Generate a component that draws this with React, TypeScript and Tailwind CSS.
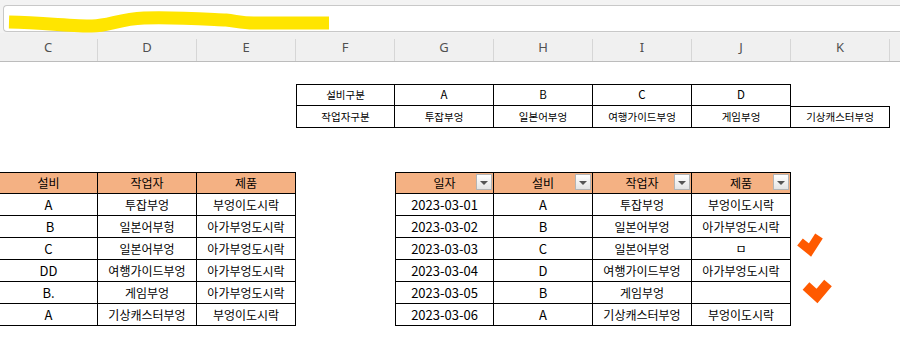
type Cell = {
  t?: string;
  b?: boolean;
  top?: boolean;
  left?: boolean;
  h?: boolean;
  f?: boolean;
  s?: boolean;
};

const E: Cell = {};
const COLS = ["C", "D", "E", "F", "G", "H", "I", "J", "K", ""];

const sm = (t: string, extra: Partial<Cell> = {}): Cell => ({ t, b: true, s: true, ...extra });
const d = (t: string, extra: Partial<Cell> = {}): Cell => ({ t, b: true, ...extra });
const hd = (t: string, extra: Partial<Cell> = {}): Cell => ({ t, b: true, h: true, top: true, ...extra });

const left = [
  ["A", "투잡부엉", "부엉이도시락"],
  [" B", "일본어부헝", "아가부엉도시락"],
  ["C", "일본어부엉", "아가부엉도시락"],
  ["DD", "여행가이드부엉", "아가부엉도시락"],
  ["B.", "게임부엉", "아가부엉도시락"],
  ["A", "기상캐스터부엉", "부엉이도시락"],
];

const right = [
  ["2023-03-01", "A", "투잡부엉", "부엉이도시락"],
  ["2023-03-02", "B", "일본어부엉", "아가부엉도시락"],
  ["2023-03-03", "C", "일본어부엉", "ㅁ"],
  ["2023-03-04", "D", "여행가이드부엉", "아가부엉도시락"],
  ["2023-03-05", "B", "게임부엉", ""],
  ["2023-03-06", "A", "기상캐스터부엉", "부엉이도시락"],
];

const rows: Cell[][] = [
  [E, E, E, E, E, E, E, E, E, E],
  [E, E, E, sm("설비구분", { top: true, left: true }), sm("A", { top: true }), sm("B", { top: true }), sm("C", { top: true }), sm("D", { top: true }), E, E],
  [E, E, E, sm("작업자구분", { left: true }), sm("투잡부엉"), sm("일본어부엉"), sm("여행가이드부엉"), sm("게임부엉"), sm("기상캐스터부엉", { top: true }), E],
  [E, E, E, E, E, E, E, E, E, E],
  [E, E, E, E, E, E, E, E, E, E],
  [hd("설비", { left: true }), hd("작업자"), hd("제품"), E, hd("일자", { left: true, f: true }), hd("설비", { f: true }), hd("작업자", { f: true }), hd("제품", { f: true }), E, E],
  ...left.map((r, i) => [
    d(r[0], { left: true }),
    d(r[1]),
    d(r[2]),
    E,
    d(right[i][0], { left: true }),
    d(right[i][1]),
    d(right[i][2]),
    d(right[i][3]),
    E,
    E,
  ]),
  [E, E, E, E, E, E, E, E, E, E],
];

// latin-only cells read a bit larger than the hangul ones in the sheet
const latin = (t?: string) => !!t && !/[\u3131-\uD7A3]/.test(t);

function FilterButton() {
  return (
    <div className="absolute right-[1px] top-[1px] w-4 h-4 border border-[#b4b4b4] bg-gradient-to-b from-white to-[#e4e4e4] flex items-center justify-center">
      <div className="w-0 h-0 mt-[2px] border-l-[4px] border-r-[4px] border-t-[4px] border-l-transparent border-r-transparent border-t-[#555]" />
    </div>
  );
}

function SheetCell({ c }: { c: Cell }) {
  const size = c.s
    ? latin(c.t) ? "text-[11.5px]" : "text-[10.5px]"
    : latin(c.t) ? "text-[13px]" : "text-[12px]";
  return (
    <div
      className={[
        "w-[99px] h-[22px] shrink-0 relative flex items-center justify-center whitespace-pre text-black",
        c.b ? "border-r border-b border-black" : "",
        c.top ? "border-t" : "",
        c.left ? "border-l" : "",
        c.h ? "bg-[#f4b183]" : "",
        size,
      ].join(" ")}
    >
      {c.t}
      {c.f && <FilterButton />}
    </div>
  );
}

export default function App() {
  return (
    <div className="relative w-[900px] h-[345px] overflow-hidden bg-white font-['Noto_Sans_CJK_KR',sans-serif]">
      {/* formula bar */}
      <div className="h-[33px] bg-[#f3f3f3] pt-[5px] pl-[3px]">
        <div className="h-[27px] w-[920px] bg-white border border-r-0 border-[#c8c8c8] rounded-[4px]">
          <svg width="340" height="27" viewBox="0 0 340 27" className="block">
            <path
              d="M5 16 C40 17 70 20 88 20 C105 20 115 13 140 12 C170 11 200 13 222 14 C232 15 238 17 250 17 L325 17"
              fill="none"
              stroke="#ffe500"
              strokeWidth="13"
            />
          </svg>
        </div>
      </div>

      {/* column headers */}
      <div className="flex h-[29px] -ml-px bg-[#f0f0f0] border-b border-[#bcbcbc]">
        {COLS.map((l, i) => (
          <div key={i} className="w-[99px] shrink-0 flex flex-col justify-end">
            <div className="h-[22px] border-r border-[#d6d6d6] flex items-center justify-center pb-[4px] text-[13px] text-[#505050] font-['Noto_Sans',sans-serif]">
              {l}
            </div>
          </div>
        ))}
      </div>

      {/* sheet */}
      <div className="flex flex-col -ml-px">
        {rows.map((r, i) => (
          <div key={i} className="flex">
            {r.map((c, j) => (
              <SheetCell key={j} c={c} />
            ))}
          </div>
        ))}
      </div>

      {/* hand-drawn check marks */}
      <svg className="absolute left-[794px] top-[228px]" width="44" height="80" viewBox="0 0 44 80">
        <polyline points="6,14 16,22 25,8" fill="none" stroke="#ff5a00" strokeWidth="9" strokeLinejoin="miter" />
        <polyline points="12,58 23,68 34,55" fill="none" stroke="#ff5a00" strokeWidth="10" strokeLinejoin="miter" />
      </svg>
    </div>
  );
}
